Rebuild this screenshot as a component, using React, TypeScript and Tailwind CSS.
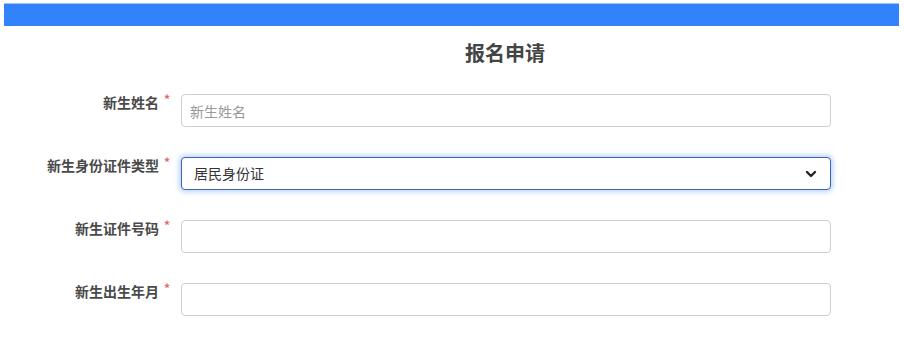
import { ChevronDown } from 'lucide-react';

const fields = [
  { label: '新生姓名', kind: 'input', placeholder: '新生姓名' },
  { label: '新生身份证件类型', kind: 'select', value: '居民身份证' },
  { label: '新生证件号码', kind: 'input', placeholder: '' },
  { label: '新生出生年月', kind: 'input', placeholder: '' },
];

export default function App() {
  return (
    <div className="w-[904px] h-[338px] bg-white overflow-hidden font-['Noto_Sans_CJK_SC',sans-serif]">
      {/* 顶部蓝条 */}
      <div className="pt-[3px] pl-[4px] pr-[5px]">
        <div className="h-[23px] bg-[#3282fb] border-t border-[#9cc4fb]" />
      </div>

      <h2 className="mt-[13px] text-center pl-[106px] text-[20px] leading-[28px] font-bold text-[#444]">报名申请</h2>

      <div className="mt-[27px] flex flex-col gap-[30px]">
        {fields.map((f) => (
          <div key={f.label} className="flex items-start">
            <div className="w-[170px] shrink-0 text-right text-[14px] leading-[17px] font-bold text-[#4a4a4a]">
              {f.label}
              <span className="ml-[5px] text-[12px] text-[#e06a6a] relative -top-[4px]">*</span>
            </div>
            {f.kind === 'select' ? (
              <div className="ml-[11px] w-[650px] h-[33px] flex items-center justify-between px-[12px] rounded-[4px] border border-[#3f63ad] shadow-[0_0_5px_2px_rgba(102,160,255,0.45)] bg-white">
                <span className="text-[14px] text-[#333]">{f.value}</span>
                <ChevronDown size={16} strokeWidth={3.5} className="text-[#222] mr-[-1px]" />
              </div>
            ) : (
              <input
                placeholder={f.placeholder}
                className="ml-[11px] w-[650px] h-[33px] px-[8px] rounded-[4px] border border-[#cfcfcf] text-[14px] text-[#333] placeholder:text-[#999] outline-none bg-white"
              />
            )}
          </div>
        ))}
      </div>
    </div>
  );
}
